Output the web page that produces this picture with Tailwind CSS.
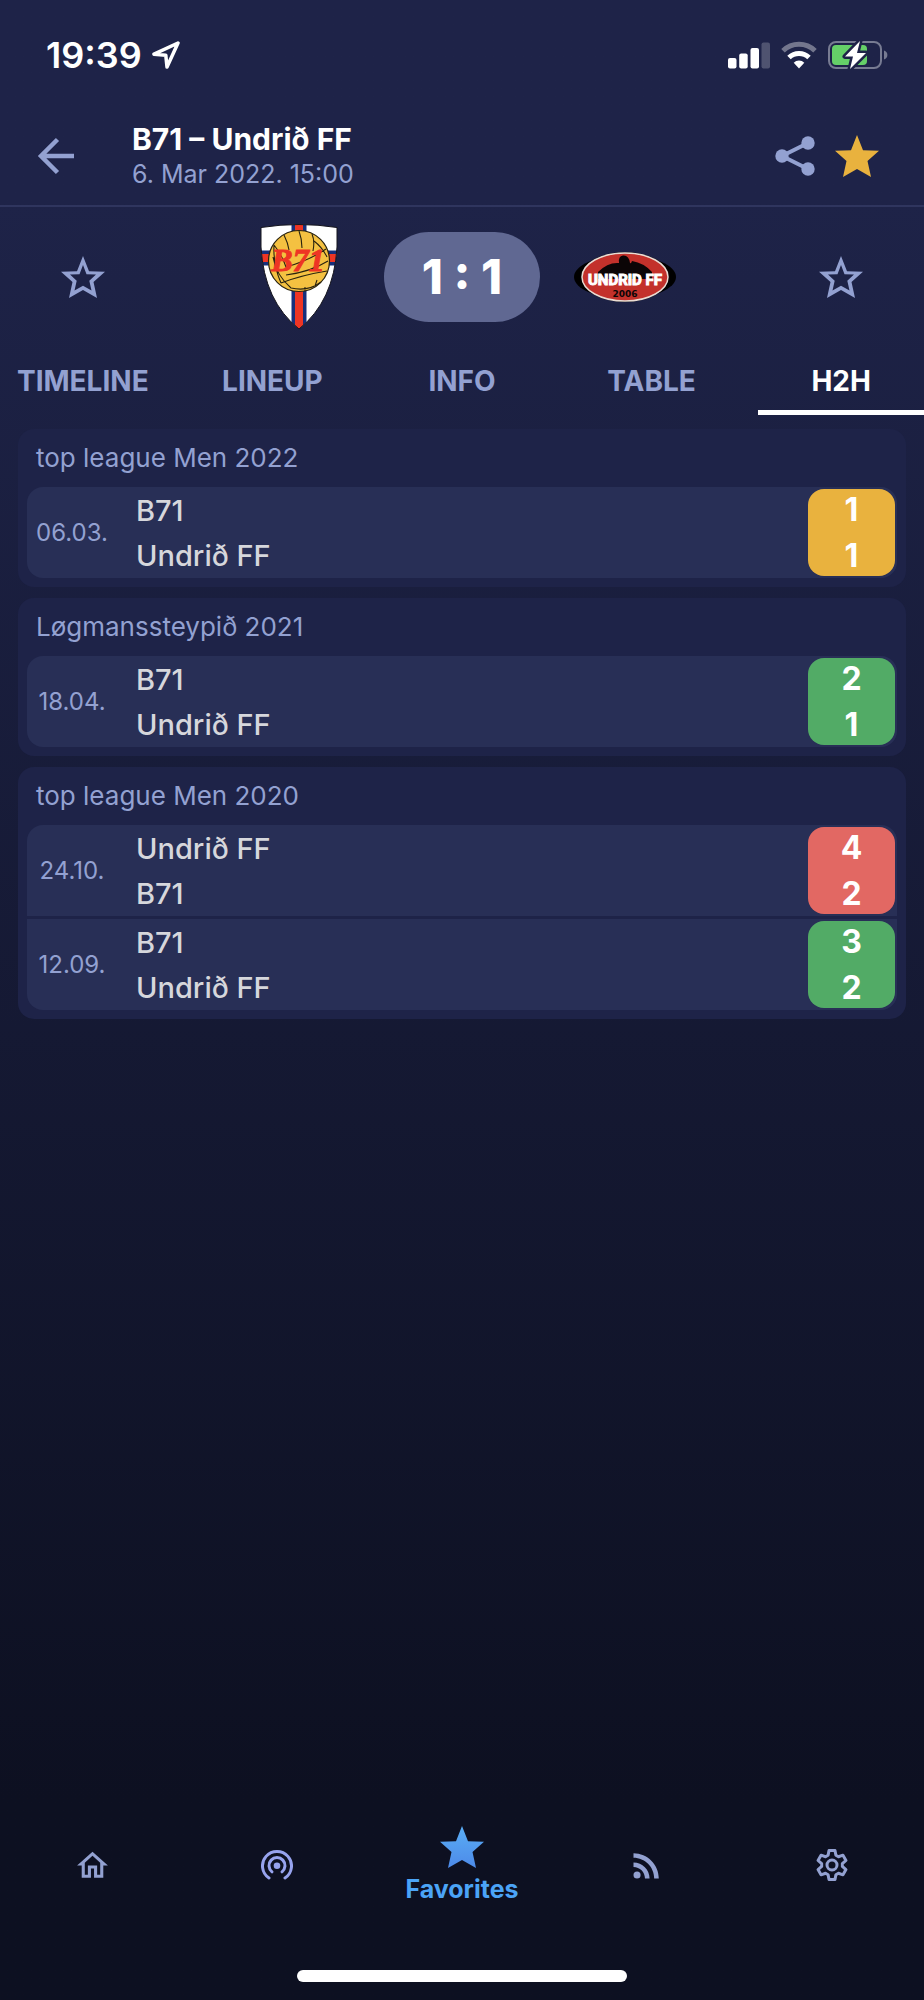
<!DOCTYPE html>
<html lang="en">
<head>
  <meta charset="UTF-8" />
  <meta name="viewport" content="width=device-width, initial-scale=1.0"/>
  <title>B71 – Undrið FF</title>
  <script src="https://cdn.jsdelivr.net/npm/@tailwindcss/browser@4"></script>
</head>
<body class="min-h-screen flex flex-col bg-linear-to-b from-[#1e2348] from-10% to-[#0d1021] to-90% text-[#93a1d1] font-['Inter',sans-serif]">

  <!-- Status bar -->
  <div class="h-[110px] shrink-0 flex items-center justify-between pl-[46px] pr-9 text-white">
    <div class="flex items-center gap-[10px]">
      <span class="text-[36px] leading-[40px] font-semibold">19:39</span>
      <svg class="w-7 h-7" viewBox="0 0 28 28" fill="none" stroke="currentColor" stroke-width="3.500" stroke-linejoin="round"><path d="M26 2L2 13.200L13.800 14.200L15 26Z"/></svg>
    </div>
    <div class="flex items-center gap-[11px]">
      <svg class="w-[42px] h-7" viewBox="0 0 42 28" fill="currentColor">
        <rect x="0" y="17" width="8.500" height="10.500" rx="2"/>
        <rect x="11.200" y="12.500" width="8.500" height="15" rx="2"/>
        <rect x="22.500" y="7" width="8.500" height="20.500" rx="2"/>
        <rect x="33.500" y="1.500" width="8.500" height="26" rx="2" opacity=".22"/>
      </svg>
      <svg class="w-9 h-7" viewBox="0 0 36 28" fill="none" stroke="currentColor" stroke-width="5">
        <path d="M2 9.800A23 23 0 0 1 34 9.800" opacity=".38"/>
        <path d="M8 16.500A14.500 14.500 0 0 1 28 16.500"/>
        <path d="M18 27.500L12.700 21.800A7.500 7.500 0 0 1 23.300 21.800Z" fill="currentColor" stroke="none"/>
      </svg>
      <svg class="w-[60px] h-[30px]" viewBox="0 0 60 30">
        <rect x="1" y="2" width="52" height="26" rx="7" fill="none" stroke="#777b92" stroke-width="2"/>
        <path d="M56 10.500C60.500 12 60.500 18 56 19.500Z" fill="#777b92"/>
        <rect x="4" y="5" width="35" height="20" rx="4" fill="#65d068"/>
        <path d="M32 1L17 16.500H25L22 29L38 13H29Z" fill="#fff" stroke="#1e2348" stroke-width="5" stroke-linejoin="round" paint-order="stroke"/>
      </svg>
    </div>
  </div>

  <!-- Match header -->
  <header class="h-[97px] shrink-0 flex items-center border-b-2 border-[#2f355e] pl-[37px] pr-[45px] pb-[3px]">
    <button type="button" aria-label="Back" class="w-[38px] h-[38px]">
      <svg viewBox="0 0 38 38" fill="none" stroke="currentColor" stroke-width="4.500"><path d="M20.500 2.500L4 19L20.500 35.500M4 19H37"/></svg>
    </button>
    <div class="flex-1 pl-[57px]">
      <h1 class="text-[30px] leading-[36px] font-bold text-white">B71 – Undrið FF</h1>
      <p class="text-[25px] leading-[34px]">6. Mar 2022. 15:00</p>
    </div>
    <div class="flex items-center gap-5">
      <button type="button" aria-label="Share" class="w-10 h-10">
        <svg viewBox="0 0 40 40" fill="currentColor"><path d="M33 7L7 20L33 33" fill="none" stroke="currentColor" stroke-width="4"/><circle cx="33" cy="7" r="6.700"/><circle cx="33" cy="33" r="6.700"/><circle cx="7" cy="20" r="6.700"/></svg>
      </button>
      <button type="button" aria-label="Favorite match" class="w-11 h-[42px] text-[#e9b23e]">
        <svg viewBox="0 0 44 42" fill="currentColor"><path d="M22 0L28 15.200L44 15.800L32.500 26L36 42L22 34L8 42L11.500 26L0 15.800L16 15.200Z"/></svg>
      </button>
    </div>
  </header>

  <!-- Teams and score -->
  <section class="h-[140px] shrink-0 grid grid-cols-[166px_1fr_166px] items-center justify-items-center">
    <button type="button" aria-label="Follow B71" class="w-11 h-[42px]">
      <svg viewBox="0 0 44 42" fill="currentColor" fill-rule="evenodd"><path d="M22 0L28 15.200L44 15.800L32.500 26L36 42L22 34L8 42L11.500 26L0 15.800L16 15.200ZM22 9L18.500 18.200L9 18.500L15.700 24.700L13.500 34.500L22 29.700L30.500 34.500L28.300 24.700L35 18.500L25.500 18.200Z"/></svg>
    </button>
    <div class="flex items-center gap-[34px]">
      <svg class="w-[102px] h-[108px]" viewBox="0 0 102 108" role="img" aria-label="B71">
        <clipPath id="shield"><path d="M13 4.500Q51 -1.500 89 4.500V24Q86 78 51 106Q16 78 13 24Z"/></clipPath>
        <g clip-path="url(#shield)">
          <path d="M0 0H102V108H0Z" fill="#fff"/>
          <path d="M43.500 0H58.500V108H43.500ZM0 27.500H102V42.500H0Z" fill="#17307c"/>
          <path d="M47 0H55V108H47ZM0 31H102V39H0Z" fill="#ee3524"/>
        </g>
        <path d="M13 4.500Q51 -1.500 89 4.500V24Q86 78 51 106Q16 78 13 24Z" fill="none" stroke="#15151d" stroke-width="1"/>
        <circle cx="51" cy="38" r="30.500" fill="#f4c141" stroke="#29230f" stroke-width="1.200"/>
        <g fill="none" stroke="#29230f" stroke-width="1.100">
          <path d="M36 12Q40 20 41 27M51 8Q54 16 54 25M64 11Q67 18 65 28M26 22Q34 32 38 44M26 22Q25 42 33 60M33 60Q54 52 79 48M38 44Q60 38 78 26M66 18Q74 24 79 34M38 52Q62 49 80 38M25 34Q28 52 43 65M43 65Q60 69 73 59M57 64V68M69 57L67 63"/>
        </g>
        <text x="50" y="48" text-anchor="middle" font-family="Liberation Serif, serif" font-size="32" font-style="italic" font-weight="700" fill="#ee3524" stroke="#ee3524" stroke-width="1">B71</text>
      </svg>
      <div class="w-[156px] h-[90px] rounded-full bg-[#606892] flex items-center justify-center text-[48px] leading-[48px] font-extrabold text-white">1 : 1</div>
      <svg class="w-[102px] h-[52px]" viewBox="0 0 102 52" role="img" aria-label="Undrið FF">
        <ellipse cx="51" cy="26" rx="51" ry="21.500" fill="#000"/>
        <ellipse cx="51" cy="26" rx="44" ry="25" fill="#000"/>
        <ellipse cx="51" cy="26" rx="43" ry="24" fill="#c3312b" stroke="#eadcd4" stroke-width="1.500"/>
        <path d="M24 21Q34 11 45 12Q44 5 49 4.500Q55 4 56 12Q57 13 58 10Q70 12 78 21V28H24Z" fill="#0b0506"/>
        <text x="51" y="34" text-anchor="middle" font-family="Roboto, sans-serif" font-size="15" font-weight="700" fill="#fff" stroke="#fff" stroke-width="1">UNDRID FF</text>
        <text x="51" y="46" text-anchor="middle" font-family="DejaVu Sans, sans-serif" font-size="9" font-weight="700" fill="#0b0506">2006</text>
      </svg>
    </div>
    <button type="button" aria-label="Follow Undrið FF" class="w-11 h-[42px]">
      <svg viewBox="0 0 44 42" fill="currentColor" fill-rule="evenodd"><path d="M22 0L28 15.200L44 15.800L32.500 26L36 42L22 34L8 42L11.500 26L0 15.800L16 15.200ZM22 9L18.500 18.200L9 18.500L15.700 24.700L13.500 34.500L22 29.700L30.500 34.500L28.300 24.700L35 18.500L25.500 18.200Z"/></svg>
    </button>
  </section>

  <!-- Tabs -->
  <nav class="h-[68px] shrink-0 grid grid-cols-5 gap-6 text-[28px] leading-[34px] font-bold text-center">
    <a href="#timeline" class="pt-[17px] border-b-[5px] border-transparent">TIMELINE</a>
    <a href="#lineup" class="pt-[17px] border-b-[5px] border-transparent">LINEUP</a>
    <a href="#info" class="pt-[17px] border-b-[5px] border-transparent">INFO</a>
    <a href="#table" class="pt-[17px] border-b-[5px] border-transparent">TABLE</a>
    <a href="#h2h" class="pt-[17px] border-b-[5px] border-white text-white">H2H</a>
  </nav>

  <!-- Head to head results -->
  <main class="flex-1 flex flex-col gap-[11px] px-[18px] pt-[14px]">
    <section class="rounded-2xl bg-[#1e2348] px-[9px] pb-[9px]">
      <h2 class="h-[58px] flex items-center px-[9px] text-[26px] leading-[30px]">top league Men 2022</h2>
      <div class="rounded-2xl overflow-hidden flex flex-col gap-[3px]">
        <div class="flex items-center bg-[#282f56]">
          <div class="w-[90px] text-center text-[24px] leading-[30px]">06.03.</div>
          <div class="flex-1 pl-[19px] text-[29px] leading-[45px] font-medium text-[#d6d7dc]">
            <div>B71</div>
            <div>Undrið FF</div>
          </div>
          <div class="w-[87px] h-[87px] m-[2px] rounded-2xl bg-[#e9b23e] flex flex-col justify-between text-center text-[32px] leading-[41px] font-bold text-white">
            <div>1</div>
            <div>1</div>
          </div>
        </div>
      </div>
    </section>

    <section class="rounded-2xl bg-[#1e2348] px-[9px] pb-[9px]">
      <h2 class="h-[58px] flex items-center px-[9px] text-[26px] leading-[30px]">Løgmanssteypið 2021</h2>
      <div class="rounded-2xl overflow-hidden flex flex-col gap-[3px]">
        <div class="flex items-center bg-[#282f56]">
          <div class="w-[90px] text-center text-[24px] leading-[30px]">18.04.</div>
          <div class="flex-1 pl-[19px] text-[29px] leading-[45px] font-medium text-[#d6d7dc]">
            <div>B71</div>
            <div>Undrið FF</div>
          </div>
          <div class="w-[87px] h-[87px] m-[2px] rounded-2xl bg-[#52ab66] flex flex-col justify-between text-center text-[32px] leading-[41px] font-bold text-white">
            <div>2</div>
            <div>1</div>
          </div>
        </div>
      </div>
    </section>

    <section class="rounded-2xl bg-[#1e2348] px-[9px] pb-[9px]">
      <h2 class="h-[58px] flex items-center px-[9px] text-[26px] leading-[30px]">top league Men 2020</h2>
      <div class="rounded-2xl overflow-hidden flex flex-col gap-[3px]">
        <div class="flex items-center bg-[#282f56]">
          <div class="w-[90px] text-center text-[24px] leading-[30px]">24.10.</div>
          <div class="flex-1 pl-[19px] text-[29px] leading-[45px] font-medium text-[#d6d7dc]">
            <div>Undrið FF</div>
            <div>B71</div>
          </div>
          <div class="w-[87px] h-[87px] m-[2px] rounded-2xl bg-[#e26863] flex flex-col justify-between text-center text-[32px] leading-[41px] font-bold text-white">
            <div>4</div>
            <div>2</div>
          </div>
        </div>
        <div class="flex items-center bg-[#282f56]">
          <div class="w-[90px] text-center text-[24px] leading-[30px]">12.09.</div>
          <div class="flex-1 pl-[19px] text-[29px] leading-[45px] font-medium text-[#d6d7dc]">
            <div>B71</div>
            <div>Undrið FF</div>
          </div>
          <div class="w-[87px] h-[87px] m-[2px] rounded-2xl bg-[#52ab66] flex flex-col justify-between text-center text-[32px] leading-[41px] font-bold text-white">
            <div>3</div>
            <div>2</div>
          </div>
        </div>
      </div>
    </section>
  </main>

  <!-- Bottom navigation -->
  <nav class="shrink-0 grid grid-cols-5 items-center justify-items-center h-[80px] mb-[65px]">
    <a href="#home" aria-label="Home">
      <svg class="w-[37px] h-[37px]" viewBox="0 0 24 24" fill="currentColor"><path d="M12 5.690l5 4.500V18h-2v-6H9v6H7v-7.810l5-4.500M12 3L2 12h3v8h6v-6h2v6h6v-8h3L12 3z"/></svg>
    </a>
    <a href="#live" aria-label="Live" class="text-[#97a3ee]">
      <svg class="w-8 h-8" viewBox="0 0 32 32" fill="none" stroke="currentColor" stroke-width="3" stroke-linecap="round"><path d="M8 29A14.500 14.500 0 1 1 24 29"/><path d="M11 22.800A8 8 0 1 1 21 22.800"/><circle cx="16" cy="16.800" r="3.300" fill="currentColor" stroke="none"/></svg>
    </a>
    <a href="#favorites" class="flex flex-col items-center gap-[6px] text-[25px] leading-[30px] font-bold text-[#4ba4f7]">
      <svg class="w-11 h-[42px]" viewBox="0 0 44 42">
        <linearGradient id="blue" x1="0" y1="0" x2="0" y2="1"><stop stop-color="#5aaef5"/><stop offset="1" stop-color="#4d8ae9"/></linearGradient>
        <path fill="url(#blue)" d="M22 0L28 15.200L44 15.800L32.500 26L36 42L22 34L8 42L11.500 26L0 15.800L16 15.200Z"/>
      </svg>
      Favorites
    </a>
    <a href="#news" aria-label="News">
      <svg class="w-[39px] h-[39px]" viewBox="0 0 24 24" fill="currentColor"><circle cx="6.180" cy="17.820" r="2.180"/><path d="M4 4.440v2.830c7.030 0 12.730 5.700 12.730 12.730h2.830c0-8.590-6.970-15.560-15.560-15.560zm0 5.660v2.830c3.900 0 7.070 3.170 7.070 7.070h2.830c0-5.470-4.430-9.900-9.900-9.900z"/></svg>
    </a>
    <a href="#settings" aria-label="Settings">
      <svg class="w-8 h-8" viewBox="-16 -16 32 32" fill="none" stroke="currentColor" stroke-width="3" stroke-linejoin="round"><path d="M-3.900 -9.700L-3 -14.400H3L3.900 -9.700L6.450 -8.230L10.970 -9.800L13.970 -4.600L10.350 -1.470V1.470L13.970 4.600L10.970 9.800L6.450 8.230L3.900 9.700L3 14.400H-3L-3.900 9.700L-6.450 8.230L-10.970 9.800L-13.970 4.600L-10.350 1.470V-1.470L-13.970 -4.600L-10.970 -9.800L-6.450 -8.230Z"/><circle r="5"/></svg>
    </a>
  </nav>

  <!-- Home indicator -->
  <div class="shrink-0 w-[330px] h-3 mx-auto mb-[18px] rounded-full bg-white"></div>

</body>
</html>
